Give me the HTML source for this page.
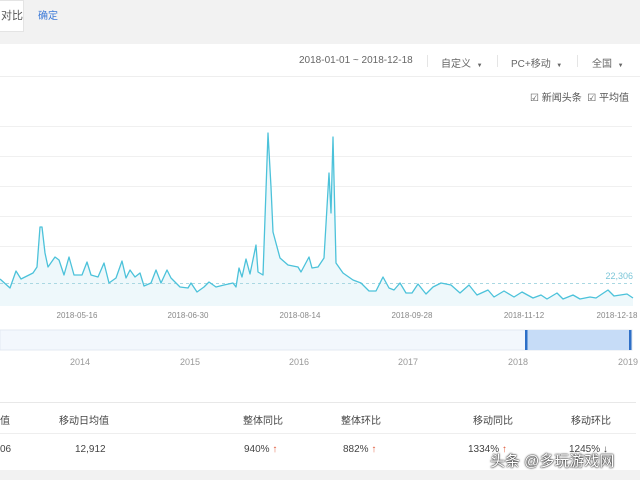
<!DOCTYPE html><html><head><meta charset="utf-8"><style>
body{margin:0;width:640px;height:480px;overflow:hidden;background:#f2f2f2;font-family:"Liberation Sans","Noto Sans CJK SC",sans-serif;position:relative}
.a{position:absolute;white-space:nowrap}
</style></head><body>
<div class="a" style="left:-4px;top:0;width:26px;height:30px;background:#fff;border:1px solid #e4e4e4;font-size:11px;color:#555;line-height:30px;text-align:right">对比</div>
<div class="a" style="left:38px;top:7px;font-size:10px;color:#3c7ad8">确定</div>
<div class="a" style="left:0;top:44px;width:640px;height:426px;background:#fff"></div>
<div class="a" style="left:0;top:76px;width:640px;height:1px;background:#eee"></div>
<div class="a" style="left:299px;top:55px;font-size:10px;color:#666">2018-01-01 ~ 2018-12-18</div>
<div class="a" style="left:427px;top:55px;width:1px;height:12px;background:#e5e5e5"></div>
<div class="a" style="left:441px;top:55px;font-size:10px;color:#666">自定义 &nbsp;<span style="font-size:6px">▼</span></div>
<div class="a" style="left:497px;top:55px;width:1px;height:12px;background:#e5e5e5"></div>
<div class="a" style="left:511px;top:55px;font-size:10px;color:#666">PC+移动 &nbsp;<span style="font-size:6px">▼</span></div>
<div class="a" style="left:577px;top:55px;width:1px;height:12px;background:#e5e5e5"></div>
<div class="a" style="left:592px;top:55px;font-size:10px;color:#666">全国 &nbsp;<span style="font-size:6px">▼</span></div>
<div class="a" style="left:530px;top:89px;font-size:10px;color:#555">☑ 新闻头条 &nbsp;☑ 平均值</div>
<svg class="a" style="left:0;top:0" width="640" height="480">
<g stroke="#f0f0f0" stroke-width="1"><line x1="0" y1="126.5" x2="632" y2="126.5"/><line x1="0" y1="156.5" x2="632" y2="156.5"/><line x1="0" y1="186.5" x2="632" y2="186.5"/><line x1="0" y1="216.5" x2="632" y2="216.5"/><line x1="0" y1="246.5" x2="632" y2="246.5"/></g>
<path fill="#eef8fb" stroke="none" d="M0,279 L10,288 16,271 21,279 29,275 33,273 37,267 40,227 42,227 45,253 48,267 55,257 59,260 64,275 69,257 74,275 82,275 87,262 91,275 98,277 104,263 109,283 116,278 122,261 126,278 130,270 135,277 140,273 144,286 151,283 156,270 161,283 167,270 171,278 180,287 188,288 191,283 197,292 204,287 209,282 216,287 224,285 233,283 236,287 239,268 242,277 246,259 250,274 256,245 258,272 263,275 268,133 271,187 273,232 280,258 288,265 298,267 301,272 309,257 312,268 318,267 324,258 329,173 331,213 333,137 336,263 343,273 353,280 361,283 369,291 376,291 383,277 389,288 394,290 400,283 406,293 412,293 418,284 426,294 433,287 441,283 451,285 460,293 469,285 477,295 488,290 494,297 504,291 514,297 522,292 533,298 541,295 547,299 557,293 563,299 573,295 580,299 590,297 596,298 608,290 614,296 627,294 633,298 L633,306 L0,306Z"/>
<line x1="0" y1="283.5" x2="632" y2="283.5" stroke="#aad8e2" stroke-dasharray="3,3"/>
<path fill="none" stroke="#4cc2da" stroke-width="1.3" stroke-linejoin="round" d="M0,279 L10,288 16,271 21,279 29,275 33,273 37,267 40,227 42,227 45,253 48,267 55,257 59,260 64,275 69,257 74,275 82,275 87,262 91,275 98,277 104,263 109,283 116,278 122,261 126,278 130,270 135,277 140,273 144,286 151,283 156,270 161,283 167,270 171,278 180,287 188,288 191,283 197,292 204,287 209,282 216,287 224,285 233,283 236,287 239,268 242,277 246,259 250,274 256,245 258,272 263,275 268,133 271,187 273,232 280,258 288,265 298,267 301,272 309,257 312,268 318,267 324,258 329,173 331,213 333,137 336,263 343,273 353,280 361,283 369,291 376,291 383,277 389,288 394,290 400,283 406,293 412,293 418,284 426,294 433,287 441,283 451,285 460,293 469,285 477,295 488,290 494,297 504,291 514,297 522,292 533,298 541,295 547,299 557,293 563,299 573,295 580,299 590,297 596,298 608,290 614,296 627,294 633,298"/>
<text x="633" y="279" font-size="9" fill="#7cc6d8" text-anchor="end" font-family="Liberation Sans">22,306</text>
<g font-size="8" fill="#888" font-family="Liberation Sans" text-anchor="middle"><text x="77" y="318">2018-05-16</text><text x="188" y="318">2018-06-30</text><text x="300" y="318">2018-08-14</text><text x="412" y="318">2018-09-28</text><text x="524" y="318">2018-11-12</text><text x="617" y="318">2018-12-18</text></g>
<rect x="0" y="330" width="632" height="20" fill="#f3f7fd" stroke="#e3e9f2"/>
<rect x="526" y="330" width="105" height="20" fill="#c6dcf7"/>
<rect x="525" y="330" width="2.5" height="20" fill="#2e6fc7"/><rect x="629" y="330" width="2.5" height="20" fill="#2e6fc7"/>
<g font-size="9" fill="#999" font-family="Liberation Sans" text-anchor="middle"><text x="80" y="365">2014</text><text x="190" y="365">2015</text><text x="299" y="365">2016</text><text x="408" y="365">2017</text><text x="518" y="365">2018</text><text x="628" y="365">2019</text></g>
<line x1="0" y1="402.5" x2="636" y2="402.5" stroke="#e8e8e8"/><line x1="0" y1="433.5" x2="636" y2="433.5" stroke="#eee"/>
</svg>
<div class="a" style="left:0;top:412px;font-size:10px;color:#444">值</div>
<div class="a" style="left:59px;top:412px;font-size:10px;color:#444">移动日均值</div>
<div class="a" style="left:243px;top:412px;font-size:10px;color:#444">整体同比</div>
<div class="a" style="left:341px;top:412px;font-size:10px;color:#444">整体环比</div>
<div class="a" style="left:473px;top:412px;font-size:10px;color:#444">移动同比</div>
<div class="a" style="left:571px;top:412px;font-size:10px;color:#444">移动环比</div>
<div class="a" style="left:0;top:444px;font-size:10px;color:#444">06</div>
<div class="a" style="left:75px;top:444px;font-size:10px;color:#444">12,912</div>
<div class="a" style="left:244px;top:444px;font-size:10px;color:#444">940% <span style="color:#e05a3a">↑</span></div>
<div class="a" style="left:343px;top:444px;font-size:10px;color:#444">882% <span style="color:#e05a3a">↑</span></div>
<div class="a" style="left:468px;top:444px;font-size:10px;color:#444">1334% <span style="color:#e05a3a">↑</span></div>
<div class="a" style="left:569px;top:444px;font-size:10px;color:#444">1245% ↓</div>
<div class="a" style="left:490px;top:450px;font-size:15px;color:#fff;text-shadow:0 0 2px #000,0 0 1px #000">头条 @多玩游戏网</div>
</body></html>
